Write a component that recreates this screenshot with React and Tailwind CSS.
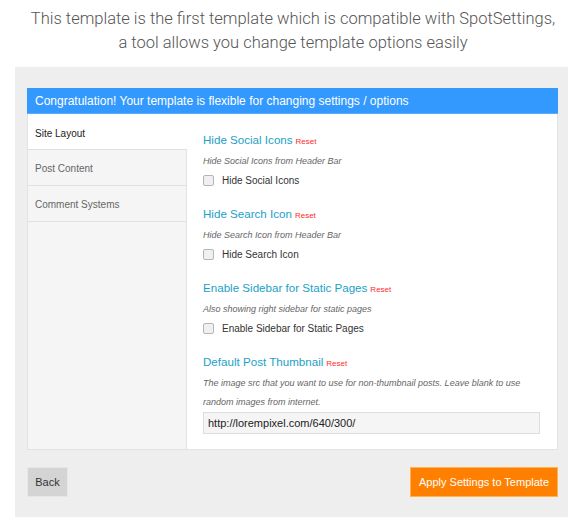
import React from "react";

const Section = ({ title, desc, children }) => (
  <div className="flex flex-col">
    <div className="flex items-baseline h-[18px]">
      <span className="text-[11.6px] text-[#1ba1c6] leading-[18px]">{title}</span>
      <span className="ml-[3px] text-[8px] text-[#ff2a2a] leading-[18px]">Reset</span>
    </div>
    <div className="mt-[3px] text-[9px] italic text-[#666] leading-[19px]">{desc}</div>
    {children}
  </div>
);

const Check = ({ label }) => (
  <div className="flex items-center h-[19px]">
    <span className="w-[11px] h-[11px] rounded-[2px] border border-[#b5b5b5] bg-[#f0f0f0]" />
    <span className="ml-[8px] text-[10px] text-[#333]">{label}</span>
  </div>
);

export default function App() {
  return (
    <div className="w-[586px] h-[531px] bg-white" style={{ fontFamily: '"Liberation Sans", Arial, sans-serif' }}>
      <div
        className="pt-[7px] text-center text-[16.5px] leading-[24px] text-[#555] font-light"
        style={{ fontFamily: 'Roboto, "Liberation Sans", sans-serif' }}
      >
        <div>This template is the first template which is compatible with SpotSettings,</div>
        <div>a tool allows you change template options easily</div>
      </div>
      <div className="mt-[12px] ml-[15px] w-[553px] h-[450px] bg-[#eeeeee] pt-[21px] pl-[12px] pr-[10px]">
        <div className="h-[26px] bg-[#3399ff] border-b border-[#5aacff] pl-[8px] flex items-center text-white text-[12px]">
          Congratulation! Your template is flexible for changing settings / options
        </div>
        <div className="flex h-[336px] bg-white border border-t-0 border-[#e3e3e3]">
          <div className="w-[159px] bg-[#f5f5f5] border-r border-[#e3e3e3] flex flex-col">
            <div className="h-[36px] bg-white pl-[7px] pt-[12px] text-[10px] text-[#222] border-b border-[#e0e0e0] -mr-px">Site Layout</div>
            <div className="h-[36px] pl-[7px] pt-[1px] flex items-center text-[10px] text-[#666] border-b border-[#e0e0e0]">Post Content</div>
            <div className="h-[36px] pl-[7px] pt-[1px] flex items-center text-[10px] text-[#666] border-b border-[#e0e0e0]">Comment Systems</div>
          </div>
          <div className="flex-1 pl-[16px] pt-[17px] pr-[17px] flex flex-col gap-[15px]">
            <Section title="Hide Social Icons" desc="Hide Social Icons from Header Bar">
              <Check label="Hide Social Icons" />
            </Section>
            <Section title="Hide Search Icon" desc="Hide Search Icon from Header Bar">
              <Check label="Hide Search Icon" />
            </Section>
            <Section title="Enable Sidebar for Static Pages" desc="Also showing right sidebar for static pages">
              <Check label="Enable Sidebar for Static Pages" />
            </Section>
            <Section
              title="Default Post Thumbnail"
              desc="The image src that you want to use for non-thumbnail posts. Leave blank to use random images from internet."
            >
              <div className="h-[22px] bg-[#f5f5f5] border border-[#dddddd] flex items-center pl-[4px] text-[11px] text-[#222]">
                http://lorempixel.com/640/300/
              </div>
            </Section>
          </div>
        </div>
        <div className="mt-[17px] flex justify-between">
          <div className="w-[41px] h-[30px] bg-[#d4d4d4] border border-[#e2ebe2] flex items-center justify-center text-[11px] text-[#333]">Back</div>
          <div className="w-[148px] h-[30px] bg-[#ff7f00] border border-[#ffb450] flex items-center justify-center text-[11px] text-white">Apply Settings to Template</div>
        </div>
      </div>
    </div>
  );
}
